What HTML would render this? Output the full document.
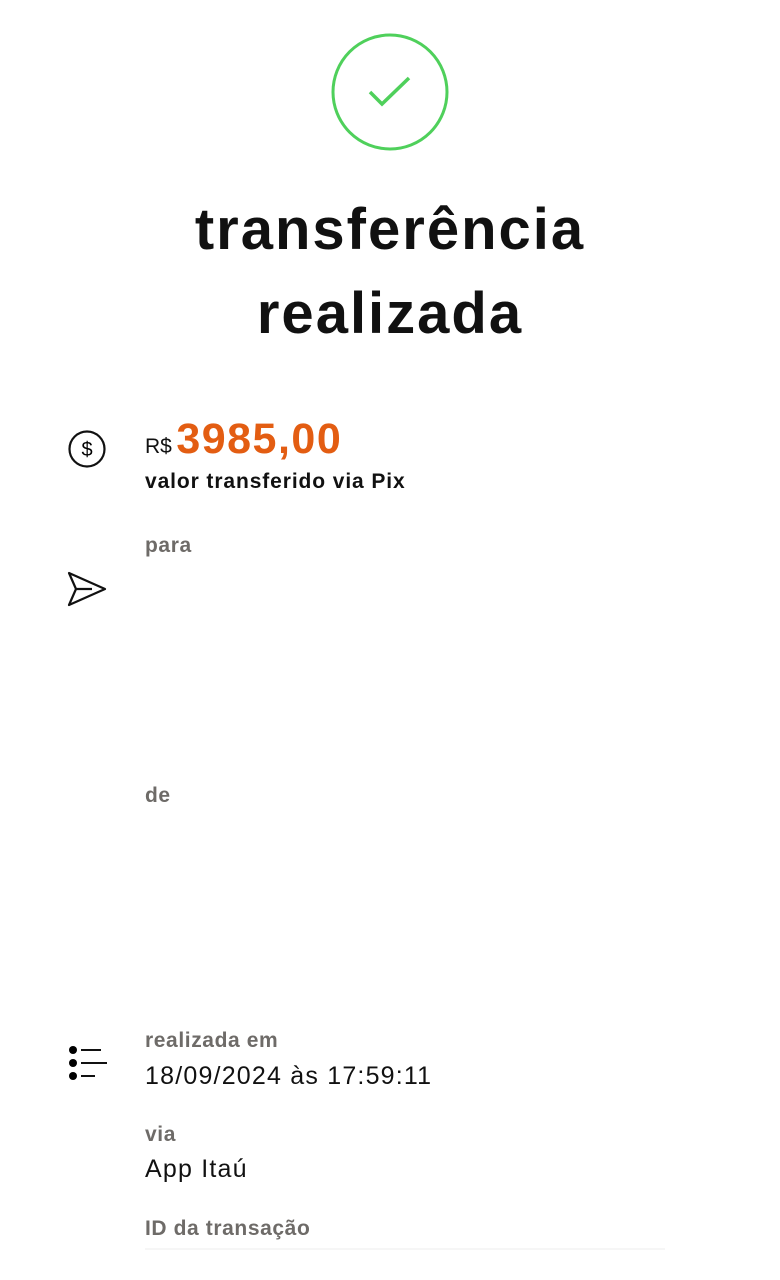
<!DOCTYPE html>
<html><head><meta charset="utf-8"><style>
body{margin:0;width:780px;height:1280px;background:#fff;position:relative;overflow:hidden;font-family:"Liberation Sans",sans-serif;color:#111}
.a{position:absolute;white-space:nowrap}
.t{font-weight:bold;font-size:58px;left:0;width:780px;text-align:center;letter-spacing:2px}
.g{color:#6e6b68;font-weight:bold;font-size:21px;letter-spacing:0.6px}
.v{font-size:25px;letter-spacing:1.2px}
</style></head><body>
<svg class="a" style="left:330px;top:32px" width="120" height="120"><circle cx="60" cy="60" r="57" fill="none" stroke="#4fd05b" stroke-width="3"/><path d="M40 60 L52 72 L79 46" fill="none" stroke="#4fd05b" stroke-width="3.5"/></svg>
<div class="a t" style="top:196px">transferência</div>
<div class="a t" style="top:280px">realizada</div>
<svg class="a" style="left:67px;top:429px" width="40" height="40"><circle cx="20" cy="20" r="17.5" fill="none" stroke="#111" stroke-width="2.2"/><text x="20" y="27" font-size="20" text-anchor="middle" font-family="Liberation Sans">$</text></svg>
<div class="a" style="left:145px;top:415px"><span style="font-size:21px">R$</span> <span style="font-size:43px;font-weight:bold;color:#e35d12;letter-spacing:1.5px">3985,00</span></div>
<div class="a" style="left:145px;top:470px;font-size:21px;font-weight:bold;letter-spacing:0.9px">valor transferido via Pix</div>
<div class="a g" style="left:145px;top:534px">para</div>
<svg class="a" style="left:66px;top:570px" width="42" height="38"><path d="M3 3 L39 19 L3 35 L10 19 Z M10 19 H26" fill="none" stroke="#111" stroke-width="2.2" stroke-linejoin="round"/></svg>
<div class="a g" style="left:145px;top:784px">de</div>
<svg class="a" style="left:66px;top:1044px" width="44" height="40"><circle cx="7" cy="6" r="4"/><circle cx="7" cy="19" r="4"/><circle cx="7" cy="32" r="4"/><path d="M15 6H35M15 19H41M15 32H29" stroke="#111" stroke-width="2"/></svg>
<div class="a g" style="left:145px;top:1029px">realizada em</div>
<div class="a v" style="left:145px;top:1062px">18/09/2024 às 17:59:11</div>
<div class="a g" style="left:145px;top:1123px">via</div>
<div class="a v" style="left:145px;top:1155px">App Itaú</div>
<div class="a g" style="left:145px;top:1217px">ID da transação</div>
<div class="a" style="left:145px;top:1248px;width:520px;height:2px;background:#f6f6f6"></div>
</body></html>
